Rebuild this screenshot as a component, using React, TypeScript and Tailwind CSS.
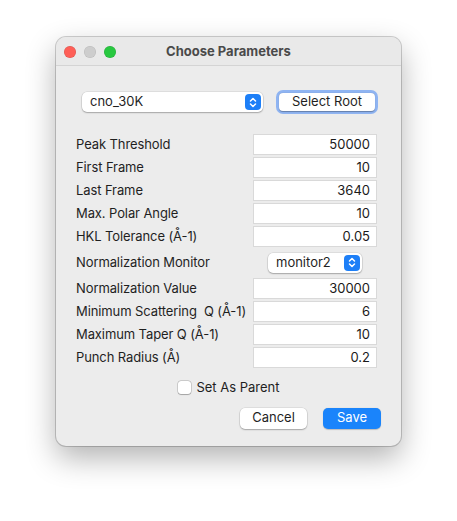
import React from 'react';

const font = { fontFamily: 'Inter, "Liberation Sans", Arial, sans-serif' };

function Stepper() {
  return (
    <span className="flex h-[16px] w-[16px] items-center justify-center rounded-[4px] bg-[#1d7ff7]">
      <svg width="8" height="11" viewBox="0 0 8 11" fill="none">
        <path d="M1.5 4 L4 1.5 L6.5 4" stroke="white" strokeWidth="1.5" strokeLinecap="round" strokeLinejoin="round" />
        <path d="M1.5 7 L4 9.5 L6.5 7" stroke="white" strokeWidth="1.5" strokeLinecap="round" strokeLinejoin="round" />
      </svg>
    </span>
  );
}

function Popup({ label, width }: { label: string; width: string }) {
  return (
    <div
      className={`${width} flex h-[20px] items-center justify-between rounded-[5px] bg-white pl-[8px] pr-[2px] text-[13px] text-[#1f1f1f] shadow-[0_0_0_0.5px_rgba(0,0,0,0.12),0_1px_1.5px_rgba(0,0,0,0.25)]`}
    >
      <span>{label}</span>
      <Stepper />
    </div>
  );
}

function Field({ label, value }: { label: string; value: string }) {
  return (
    <div className="flex h-[21px] items-center">
      <span className="w-[177px] whitespace-pre text-[13px] tracking-[-0.1px] text-[#1f1f1f]">{label}</span>
      <div className="flex h-[21px] w-[124px] items-center justify-end border border-[#d9d9d9] bg-white pr-[6px] text-[13px] text-[#1a1a1a]">
        {value}
      </div>
    </div>
  );
}

export default function App() {
  return (
    <div className="min-h-[521px] bg-white pl-[56px] pt-[37px]" style={font}>
      <div className="flex h-[409px] w-[345px] flex-col overflow-hidden rounded-[10px] bg-[#ececec] shadow-[0_0_0_1px_rgba(0,0,0,0.18),0_12px_30px_rgba(0,0,0,0.3)]">
        <div className="relative flex h-[29px] items-center justify-center border-b border-[#d4d4d4] bg-[#e9e9e9] pt-[2px]">
          <div className="absolute left-[8px] top-[9px] flex gap-[8px]">
            <span className="h-[12px] w-[12px] rounded-full bg-[#fe5f57] shadow-[inset_0_0_0_0.5px_rgba(0,0,0,0.15)]" />
            <span className="h-[12px] w-[12px] rounded-full bg-[#cdcdcd] shadow-[inset_0_0_0_0.5px_rgba(0,0,0,0.1)]" />
            <span className="h-[12px] w-[12px] rounded-full bg-[#28c840] shadow-[inset_0_0_0_0.5px_rgba(0,0,0,0.15)]" />
          </div>
          <span className="text-[13px] font-bold text-[#4a4a4a]">Choose Parameters</span>
        </div>

        <div className="flex flex-col pl-[20px] pr-[23px]">
          <div className="mt-[24px] flex items-center pl-[6px]">
            <Popup label="cno_30K" width="w-[185px]" />
            <div className="ml-[13px] rounded-[7px] bg-[#8fb4f2] p-[3px]">
              <div className="flex h-[18px] w-[96px] items-center justify-center rounded-[4px] bg-white text-[13px] text-[#1f1f1f] shadow-[0_0.5px_1px_rgba(0,0,0,0.3)]">
                Select Root
              </div>
            </div>
          </div>

          <div className="mt-[20px] flex flex-col gap-[2px]">
            <Field label="Peak Threshold" value="50000" />
            <Field label="First Frame" value="10" />
            <Field label="Last Frame" value="3640" />
            <Field label="Max. Polar Angle" value="10" />
            <Field label="HKL Tolerance (Å-1)" value="0.05" />
            <div className="flex h-[27px] items-center">
              <span className="w-[177px] text-[13px] tracking-[-0.1px] text-[#1f1f1f]">Normalization Monitor</span>
              <div className="flex w-[124px] justify-center">
                <Popup label="monitor2" width="w-[94px]" />
              </div>
            </div>
            <Field label="Normalization Value" value="30000" />
            <Field label="Minimum Scattering  Q (Å-1)" value="6" />
            <Field label="Maximum Taper Q (Å-1)" value="10" />
            <Field label="Punch Radius (Å)" value="0.2" />
          </div>

          <div className="mt-[10px] flex items-center justify-center gap-[5px] pl-[4px]">
            <span className="h-[13px] w-[13px] rounded-[3px] bg-white shadow-[0_0_0_0.5px_rgba(0,0,0,0.25),0_0.5px_1px_rgba(0,0,0,0.2)]" />
            <span className="text-[13px] text-[#1f1f1f]">Set As Parent</span>
          </div>

          <div className="mt-[10px] flex justify-end gap-[16px]">
            <div className="flex h-[21px] w-[67px] items-center justify-center rounded-[5px] bg-white text-[13px] text-[#1f1f1f] shadow-[0_0_0_0.5px_rgba(0,0,0,0.12),0_1px_1.5px_rgba(0,0,0,0.25)]">
              Cancel
            </div>
            <div className="mr-[-3px] flex h-[21px] w-[58px] items-center justify-center rounded-[5px] bg-[#1a84fb] text-[13px] text-white shadow-[0_0.5px_1px_rgba(0,0,0,0.2)]">
              Save
            </div>
          </div>
        </div>
      </div>
    </div>
  );
}
